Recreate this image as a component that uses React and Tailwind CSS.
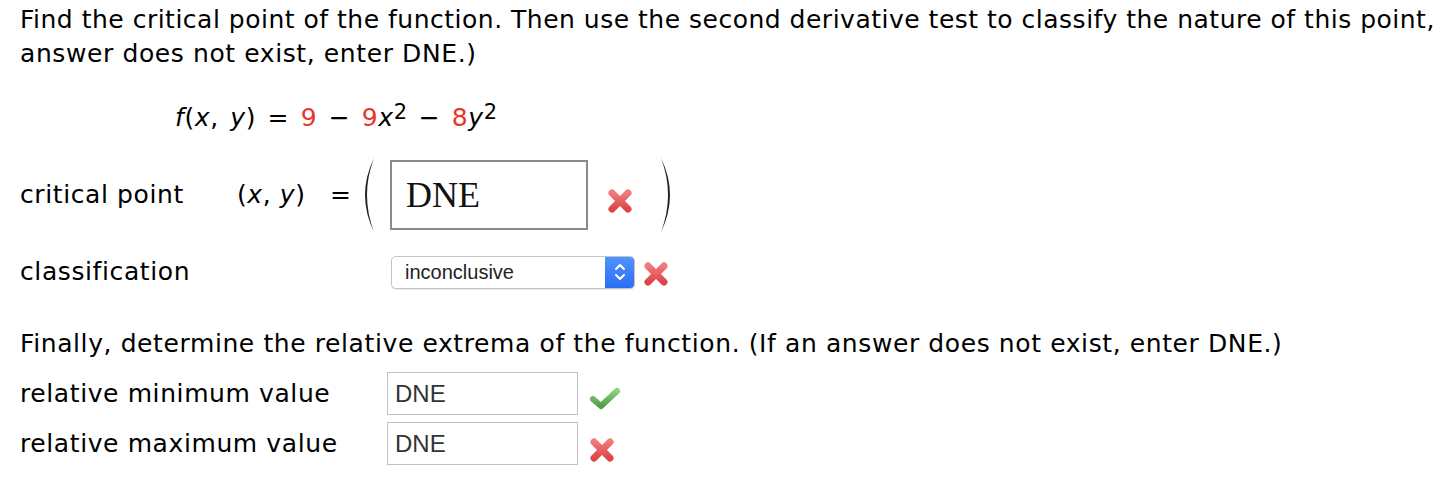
import React from 'react';

function RedX({ className = '' }) {
  return (
    <svg className={className} width="28" height="28" viewBox="0 0 28 28">
      <defs>
        <linearGradient id="xg" x1="0" y1="0" x2="0" y2="1">
          <stop offset="0" stopColor="#f07a7a" />
          <stop offset="1" stopColor="#dc4548" />
        </linearGradient>
      </defs>
      <g stroke="url(#xg)" strokeWidth="7" strokeLinecap="round">
        <line x1="6" y1="6" x2="22" y2="22" />
        <line x1="22" y1="6" x2="6" y2="22" />
      </g>
    </svg>
  );
}

function GreenCheck() {
  return (
    <svg width="34" height="26" viewBox="0 0 34 26">
      <defs>
        <linearGradient id="cg" x1="0" y1="0" x2="0" y2="1">
          <stop offset="0" stopColor="#8cd07a" />
          <stop offset="1" stopColor="#4f9f45" />
        </linearGradient>
      </defs>
      <path
        d="M5 13 L13 20 L29 5"
        fill="none"
        stroke="url(#cg)"
        strokeWidth="6"
        strokeLinecap="round"
        strokeLinejoin="round"
      />
    </svg>
  );
}

function Paren({ right = false }) {
  return (
    <svg width="20" height="76" viewBox="0 0 20 76" className={right ? 'scale-x-[-1]' : ''}>
      <path d="M17 1 Q -1 38 17 75 Q 3 38 17 1 Z" fill="#222" />
    </svg>
  );
}

function Sq() {
  return <span className="inline-block align-top text-[21px] leading-[20px] mt-[1px] tracking-normal">2</span>;
}

export default function App() {
  return (
    <div className="bg-white w-[1438px] h-[502px] overflow-hidden pl-[20px] pt-[3px] text-[25px] tracking-[0.6px] text-black font-['DejaVu_Sans',Verdana,sans-serif]">
      <p className="leading-[34px] whitespace-nowrap">
        <span className="tracking-[0.5px]">
          Find the critical point of the function. Then use the second derivative test to classify the nature of this point,
        </span>
        <br />
        answer does not exist, enter DNE.)
      </p>

      <div className="mt-[30px] pl-[155px] h-[34px] leading-[34px] whitespace-nowrap [word-spacing:3px]">
        <i>f</i>(<i>x</i>, <i>y</i>) = <span className="text-[#e8352a]">9</span> − <span className="text-[#e8352a]">9</span>
        <i>x</i>
        <Sq /> − <span className="text-[#e8352a]">8</span>
        <i>y</i>
        <Sq />
      </div>

      <div className="mt-[22px] h-[76px] flex items-center">
        <span className="w-[217px]">critical point</span>
        <span className="w-[93px]">
          (<i>x</i>, <i>y</i>)
        </span>
        <span className="w-[27px]">=</span>
        <Paren />
        <div className="ml-[13px] w-[198px] h-[70px] border-2 border-[#8a8a8a] flex items-center pl-[14px] font-['Liberation_Serif',serif] text-[36px] tracking-normal text-[#111]">
          DNE
        </div>
        <RedX className="ml-[18px] mt-[12px]" />
        <div className="ml-[24px]">
          <Paren right />
        </div>
      </div>

      <div className="mt-[22px] h-[34px] flex items-center">
        <span className="w-[371px]">classification</span>
        <div className="w-[244px] h-[33px] rounded-[5px] border border-[#c4c4c4] bg-white flex items-stretch overflow-hidden shadow-[0_1px_1px_rgba(0,0,0,0.08)]">
          <span className="flex-1 flex items-center pl-[13px] font-['Liberation_Sans',Arial,sans-serif] text-[20px] tracking-normal text-[#222]">
            inconclusive
          </span>
          <span className="w-[29px] bg-gradient-to-b from-[#4f94ff] to-[#2a6df3] flex items-center justify-center">
            <svg width="12" height="20" viewBox="0 0 12 20">
              <g fill="none" stroke="white" strokeWidth="2" strokeLinecap="round" strokeLinejoin="round">
                <path d="M2 7 L6 3 L10 7" />
                <path d="M2 13 L6 17 L10 13" />
              </g>
            </svg>
          </span>
        </div>
        <RedX className="ml-[7px] mt-[3px]" />
      </div>

      <p className="mt-[38px] leading-[34px] whitespace-nowrap">
        Finally, determine the relative extrema of the function. (If an answer does not exist, enter DNE.)
      </p>

      <div className="mt-[11px] h-[43px] flex items-center">
        <span className="w-[367px]">relative minimum value</span>
        <div className="w-[191px] h-[43px] border border-[#c0c0c0] flex items-center pl-[7px] font-['Liberation_Sans',Arial,sans-serif] text-[24px] tracking-normal text-[#333]">
          DNE
        </div>
        <span className="ml-[10px] mt-[10px]">
          <GreenCheck />
        </span>
      </div>

      <div className="mt-[7px] h-[43px] flex items-center">
        <span className="w-[367px]">relative maximum value</span>
        <div className="w-[191px] h-[43px] border border-[#c0c0c0] flex items-center pl-[7px] font-['Liberation_Sans',Arial,sans-serif] text-[24px] tracking-normal text-[#333]">
          DNE
        </div>
        <RedX className="ml-[10px] mt-[12px]" />
      </div>
    </div>
  );
}
